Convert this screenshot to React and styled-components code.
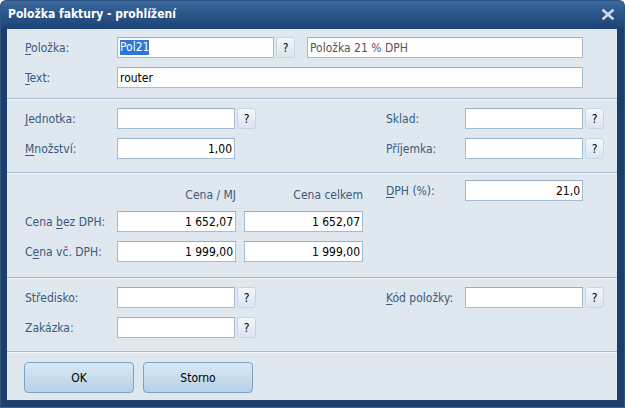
import React from "react";
import styled, { createGlobalStyle } from "styled-components";

const GlobalStyle = createGlobalStyle`
  html, body {
    margin: 0;
    padding: 0;
    background: #ffffff;
  }
  body {
    font-family: "DejaVu Sans Condensed", "DejaVu Sans", sans-serif;
    font-stretch: condensed;
    font-size: 12px;
  }
`;

export default function App() {
  return (
    <>
      <GlobalStyle />
      <Window>
        <TitleBar>
          <Title>Položka faktury - prohlížení</Title>
          <CloseIcon width="12" height="11" viewBox="0 0 12 11">
            <path d="M1.5 1.5 L10.5 9.5 M10.5 1.5 L1.5 9.5" stroke="#c9d9ea" strokeWidth="2.6" strokeLinecap="square" />
          </CloseIcon>
        </TitleBar>
        <Client>
          <Section $pt={8} $pb={10}>
            <Row>
              <Label><u>P</u>oložka:</Label>
              <Input $w={157}>
                <Selected>Pol21</Selected>
              </Input>
              <HelpButton>?</HelpButton>
              <Input $w={276} $ml={12} $muted>Položka 21 % DPH</Input>
            </Row>
            <Row>
              <Label><u>T</u>ext:</Label>
              <Input $w={466}>router</Input>
            </Row>
          </Section>

          <Section $pt={9} $pb={13}>
            <Row>
              <Half>
                <Label><u>J</u>ednotka:</Label>
                <Input $w={118} />
                <HelpButton>?</HelpButton>
              </Half>
              <Label $w={79}>Sklad:</Label>
              <Input $w={118} />
              <HelpButton>?</HelpButton>
            </Row>
            <Row>
              <Half>
                <Label><u>M</u>nožství:</Label>
                <Input $w={118} $right>1,00</Input>
              </Half>
              <Label $w={79}>Příjemka:</Label>
              <Input $w={118} />
              <HelpButton>?</HelpButton>
            </Row>
          </Section>

          <Section $pt={7} $pb={15}>
            <SplitRow>
              <PriceBlock>
                <HeaderRow>
                  <Spacer />
                  <ColHeader>Cena / MJ</ColHeader>
                  <ColHeader>Cena celkem</ColHeader>
                </HeaderRow>
                <Row>
                  <Label>Cena <u>b</u>ez DPH:</Label>
                  <Input $w={119} $right>1 652,07</Input>
                  <Input $w={119} $ml={8} $right>1 652,07</Input>
                </Row>
                <Row>
                  <Label>C<u>e</u>na vč. DPH:</Label>
                  <Input $w={119} $right>1 999,00</Input>
                  <Input $w={119} $ml={8} $right>1 999,00</Input>
                </Row>
              </PriceBlock>
              <Row>
                <Label $w={79}><u>D</u>PH (%):</Label>
                <Input $w={118} $right>21,0</Input>
              </Row>
            </SplitRow>
          </Section>

          <Section $pt={9} $pb={13}>
            <Row>
              <Half>
                <Label>Středisko:</Label>
                <Input $w={118} />
                <HelpButton>?</HelpButton>
              </Half>
              <Label $w={79}><u>K</u>ód položky:</Label>
              <Input $w={118} />
              <HelpButton>?</HelpButton>
            </Row>
            <Row>
              <Half>
                <Label>Zakázka:</Label>
                <Input $w={118} />
                <HelpButton>?</HelpButton>
              </Half>
            </Row>
          </Section>

          <ButtonBar>
            <DialogButton>OK</DialogButton>
            <DialogButton>Storno</DialogButton>
          </ButtonBar>
        </Client>
      </Window>
    </>
  );
}

const Window = styled.div`
  width: 625px;
  height: 408px;
  box-sizing: border-box;
  display: flex;
  flex-direction: column;
  background: #1d3e6b;
  border-radius: 6px 6px 0 0;
  border: 1px solid #2f5684;
  border-bottom-color: #3a6494;
  padding: 0 7px 7px 6px;
  overflow: hidden;
`;

const TitleBar = styled.div`
  height: 28px;
  flex: none;
  margin: 0 -7px 0 -6px;
  padding: 0 10px 0 7px;
  display: flex;
  align-items: center;
  justify-content: space-between;
  background: linear-gradient(#3c6a9f 0%, #2b5588 45%, #1f4476 100%);
`;

const Title = styled.span`
  color: #ffffff;
  font-weight: bold;
  font-size: 12px;
  margin-top: -2px;
`;

const CloseIcon = styled.svg`
  display: block;
  margin-top: -2px;
`;

const Client = styled.div`
  flex: 1;
  background: #dfe7ef;
  display: flex;
  flex-direction: column;
`;

const Section = styled.div`
  display: flex;
  flex-direction: column;
  gap: 9px;
  padding: ${(p) => p.$pt}px 0 ${(p) => p.$pb}px 18px;
  border-bottom: 1px solid #a7bbcf;
  box-shadow: 0 1px 0 #f3f6f9;
`;

const Row = styled.div`
  display: flex;
  align-items: center;
  height: 21px;
`;

const SplitRow = styled.div`
  display: flex;
  align-items: flex-start;
`;

const Half = styled.div`
  display: flex;
  align-items: center;
  width: 361px;
  flex: none;
`;

const PriceBlock = styled.div`
  width: 361px;
  flex: none;
  display: flex;
  flex-direction: column;
  gap: 9px;
`;

const HeaderRow = styled.div`
  display: flex;
  align-items: flex-end;
  height: 22px;
`;

const Spacer = styled.div`
  width: 92px;
  flex: none;
`;

const ColHeader = styled.div`
  width: 119px;
  margin-right: 8px;
  text-align: right;
  color: #3b5a7c;
  line-height: 14px;
`;

const Label = styled.div`
  width: ${(p) => p.$w || 92}px;
  flex: none;
  color: #3b5a7c;
  white-space: nowrap;
  u {
    text-underline-offset: 2px;
  }
`;

const Input = styled.div`
  width: ${(p) => p.$w}px;
  height: 21px;
  flex: none;
  box-sizing: border-box;
  margin-left: ${(p) => p.$ml || 0}px;
  background: #ffffff;
  border: 1px solid #a3bcd3;
  border-top-color: #94afc8;
  padding: 0 2px;
  display: flex;
  align-items: center;
  justify-content: ${(p) => (p.$right ? "flex-end" : "flex-start")};
  color: ${(p) => (p.$muted ? "#555555" : "#000000")};
  white-space: nowrap;
  overflow: hidden;
`;

const Selected = styled.span`
  background: #2c78d6;
  color: #ffffff;
  line-height: 15px;
`;

const HelpButton = styled.div`
  width: 19px;
  height: 21px;
  flex: none;
  box-sizing: border-box;
  margin-left: 2px;
  border: 1px solid #c6d6e5;
  border-radius: 3px;
  background: linear-gradient(#f3f7fb, #d9e5f0);
  color: #000000;
  display: flex;
  align-items: center;
  justify-content: center;
`;

const ButtonBar = styled.div`
  display: flex;
  gap: 9px;
  padding: 10px 0 0 17px;
`;

const DialogButton = styled.div`
  width: 110px;
  height: 31px;
  box-sizing: border-box;
  border: 1px solid #7da2c6;
  border-radius: 4px;
  background: linear-gradient(#d9e8f4 0%, #c8ddee 50%, #b6d1e6 100%);
  display: flex;
  align-items: center;
  justify-content: center;
  color: #000000;
`;
